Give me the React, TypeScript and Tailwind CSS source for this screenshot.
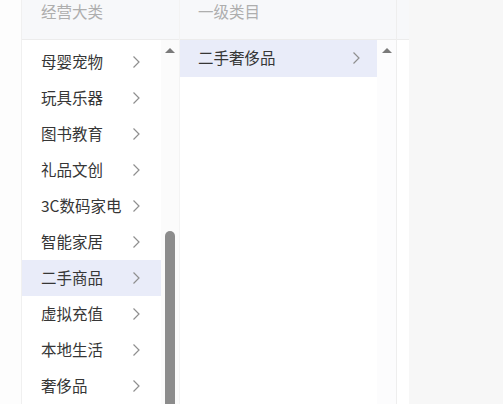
import React from "react";

const categories = [
  "母婴宠物",
  "玩具乐器",
  "图书教育",
  "礼品文创",
  "3C数码家电",
  "智能家居",
  "二手商品",
  "虚拟充值",
  "本地生活",
  "奢侈品",
];

const Chevron = ({ className }: { className?: string }) => (
  <svg
    className={className}
    width="9"
    height="14"
    viewBox="0 0 9 14"
    fill="none"
    stroke="#8f8f8f"
    strokeWidth="1.2"
  >
    <path d="M1.5 1.5 L7 7 L1.5 12.5" />
  </svg>
);

const UpArrow = () => (
  <div className="h-0 w-0 border-x-[5px] border-b-[5px] border-x-transparent border-b-[#7a7a7a]" />
);

const Row = ({ label, active }: { label: string; active?: boolean }) => (
  <div
    className={`flex h-[36px] items-center pl-[19px] ${
      active ? "bg-[#e9ecf9]" : ""
    }`}
  >
    <span className="w-[91px] shrink-0 whitespace-nowrap text-[15.5px] text-[#363636]">
      {label}
    </span>
    <Chevron className="shrink-0" />
  </div>
);

const App: React.FC = () => {
  return (
    <div
      className="flex h-[404px] w-[503px] overflow-hidden bg-white"
      style={{ fontFamily: '"Noto Sans CJK SC", "Noto Sans", sans-serif' }}
    >
      {/* left gutter */}
      <div className="w-[22px] shrink-0 border-r border-[#f0f0f0] bg-[#fdfdfd]" />

      {/* 经营大类 */}
      <div className="flex w-[158px] shrink-0 flex-col border-r border-[#f3f3f3]">
        <div className="flex h-[40px] shrink-0 items-start border-b border-[#ececec] bg-[#f7f8fa] pl-[19px]">
          <span className="text-[15.5px] text-[#aeaeae]">经营大类</span>
        </div>
        <div className="flex flex-1">
          <div className="w-[139px] shrink-0 pt-[4px]">
            {categories.map((c) => (
              <Row key={c} label={c} active={c === "二手商品"} />
            ))}
          </div>
          <div className="flex flex-1 flex-col items-center bg-[#fbfbfb] pt-[8px]">
            <UpArrow />
            <div className="mt-[178px] w-[10px] flex-1 rounded-t-full bg-[#8c8c8c]" />
          </div>
        </div>
      </div>

      {/* 一级类目 */}
      <div className="flex w-[217px] shrink-0 flex-col border-r border-[#eeeeee]">
        <div className="flex h-[40px] shrink-0 items-start border-b border-[#ececec] bg-[#f7f8fa] pl-[18px]">
          <span className="text-[15.5px] text-[#aeaeae]">一级类目</span>
        </div>
        <div className="flex flex-1">
          <div className="w-[197px] shrink-0">
            <div className="flex h-[37px] items-center bg-[#e9ecf9] pb-[1px] pl-[18px]">
              <span className="w-[154px] shrink-0 text-[15.5px] text-[#363636]">二手奢侈品</span>
              <Chevron className="shrink-0" />
            </div>
          </div>
          <div className="flex flex-1 flex-col items-center bg-[#fcfcfd] pt-[8px]">
            <UpArrow />
          </div>
        </div>
      </div>

      <div className="flex w-[12px] shrink-0 flex-col">
        <div className="h-[40px] border-b border-[#ececec] bg-[#f7f8fa]" />
        <div className="flex-1 bg-white" />
      </div>

      <div className="flex-1 bg-[#f7f7f7]" />
    </div>
  );
};

export default App;
